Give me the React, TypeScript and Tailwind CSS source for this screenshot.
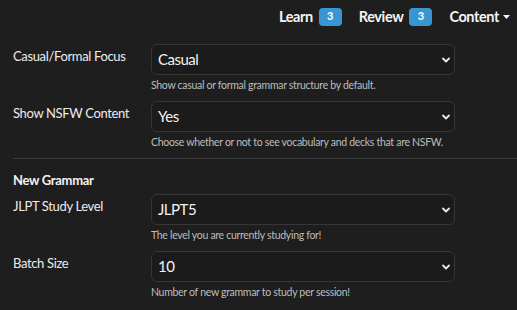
const font = { fontFamily: "Lato, 'Noto Sans', sans-serif" };

function Chevron() {
  return (
    <svg width="8" height="6" viewBox="0 0 8 6" fill="none" stroke="#e8e8e8" strokeWidth="1.8" strokeLinecap="round" strokeLinejoin="round">
      <path d="M1 1.5 4 4.5 7 1.5" />
    </svg>
  );
}

function Select({ value }: { value: string }) {
  return (
    <div className="flex items-center justify-between h-[31px] w-[304px] rounded-[6px] border border-[#363636] bg-[#1b1b1b] pl-[6px] pr-[4px]">
      <span className="text-[15px] tracking-[-0.5px] text-[#f2f2f2] leading-none">{value}</span>
      <Chevron />
    </div>
  );
}

function Row({ label, value, help, className }: { label: string; value: string; help: string; className?: string }) {
  return (
    <div className={"flex " + (className ?? "")}>
      <div className="w-[138px] pt-[2px] text-[13px] tracking-[-0.35px] leading-[20px] text-[#ececec]">{label}</div>
      <div className="flex flex-col">
        <Select value={value} />
        <div className="mt-[2px] text-[10.5px] tracking-[-0.3px] leading-[16px] text-[#bdbdbd]">{help}</div>
      </div>
    </div>
  );
}

function Badge({ n }: { n: number }) {
  return (
    <span className="ml-[6px] inline-flex items-center justify-center w-[23px] h-[18px] rounded-[4px] bg-[#3897d3] text-[11px] font-bold tracking-normal text-white">
      {n}
    </span>
  );
}

export default function App() {
  return (
    <div className="w-[517px] h-[310px] overflow-hidden bg-[#1e1e1e]" style={font}>
      {/* Top nav */}
      <header className="flex items-center justify-end h-[33px] pr-[7px] text-[14.5px] tracking-[-0.4px] font-bold text-[#f5f5f5]">
        <span className="flex items-center">Learn<Badge n={3} /></span>
        <span className="flex items-center ml-[17px]">Review<Badge n={3} /></span>
        <span className="flex items-center ml-[17px]">
          Content
          <svg className="ml-[4px]" width="7" height="4" viewBox="0 0 7 4"><path d="M0 0h7L3.5 4z" fill="#f5f5f5" /></svg>
        </span>
      </header>

      <main className="pl-[13px] pt-[11px]">
        <Row label="Casual/Formal Focus" value="Casual" help="Show casual or formal grammar structure by default." />
        <Row className="mt-[8px]" label="Show NSFW Content" value="Yes" help="Choose whether or not to see vocabulary and decks that are NSFW." />

        <div className="mt-[8px] border-t border-[#3a3a3a]" />

        <div className="mt-[11px] text-[13px] tracking-[-0.3px] font-bold leading-[20px] text-[#f2f2f2]">New Grammar</div>
        <Row className="mt-[4px]" label="JLPT Study Level" value="JLPT5" help="The level you are currently studying for!" />
        <Row className="mt-[8px]" label="Batch Size" value="10" help="Number of new grammar to study per session!" />
      </main>
    </div>
  );
}
